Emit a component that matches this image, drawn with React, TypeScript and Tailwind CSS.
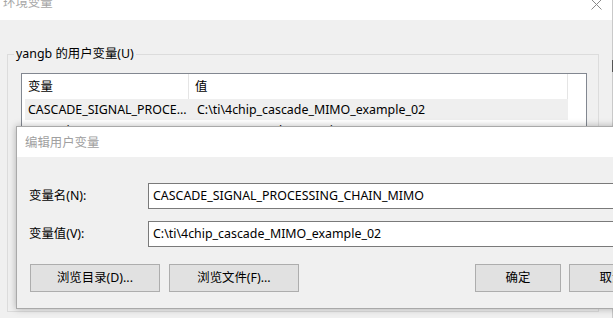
import React from "react";

const font = { fontFamily: '"Noto Sans", "Noto Sans CJK SC", sans-serif' };

export default function App() {
  return (
    <div
      className="relative w-[613px] h-[318px] overflow-hidden bg-[#f0f0f0] text-[12.4px] leading-[16px] text-black"
      style={font}
    >
      {/* Background window: 环境变量 */}
      <div className="flex flex-col w-[613px] h-[318px] border-r border-[#c9c9c9]">
        <div className="relative h-[20px] shrink-0 bg-white">
          <div className="pl-[3px] -mt-[4px] text-[#a6a6a6] leading-[14px]">环境变量</div>
          <svg className="absolute left-[591px] -top-[1px]" width="11" height="11" viewBox="0 0 11 11">
            <path d="M0.5 0.5 L10.5 10.5 M10.5 0.5 L0.5 10.5" stroke="#8a8a8a" strokeWidth="1" fill="none" />
          </svg>
        </div>
        <div className="flex-1 pt-[34px] pl-[7px] pr-[13px]">
          <div className="relative h-[258px] border border-[#dcdcdc] pt-[18px] pl-[13px]">
            <div className="absolute -top-[9px] left-[6px] bg-[#f0f0f0] px-[2px] leading-[16px]">
              yangb 的用户变量(U)
            </div>
            <div className="w-[566px] h-[120px] border border-[#828790] bg-white">
              <div className="flex h-[25px] w-[546px] items-center border-r border-[#e5e5e5]">
                <div className="w-[167px] h-full flex items-center pl-[6px] border-r border-[#e5e5e5]">变量</div>
                <div className="pl-[6px]">值</div>
              </div>
              <div className="ml-[3px] w-[543px] h-[21px] flex items-center bg-[#efefef]">
                <div className="w-[164px] pl-[3px] whitespace-nowrap">CASCADE_SIGNAL_PROCE...</div>
                <div className="pl-[8px] whitespace-nowrap">C:\ti\4chip_cascade_MIMO_example_02</div>
              </div>
              <div className="ml-[3px] w-[543px] h-[21px] flex items-center">
                <div className="w-[164px] pl-[3px] whitespace-nowrap">OneDrive</div>
                <div className="pl-[8px] whitespace-nowrap">C:\Users\yangb\OneDrive</div>
              </div>
            </div>
          </div>
        </div>
      </div>
      <div className="absolute left-[612px] top-[60px] w-[1px] h-[12px] bg-[#555]" />

      {/* Foreground dialog: 编辑用户变量 */}
      <div className="absolute left-[16px] top-[126px] w-[680px] h-[183px] flex flex-col border border-[#a9a9a9] bg-[#f0f0f0] shadow-[0_0_7px_rgba(0,0,0,0.28)]">
        <div className="h-[30px] shrink-0 bg-white flex items-center pl-[8px] pt-[1px] text-[#a0a0a0]">编辑用户变量</div>
        <div className="flex flex-col pt-[26px] pl-[12px]">
          <div className="flex items-center">
            <div className="w-[119px]">变量名(N):</div>
            <div className="w-[520px] h-[26px] border border-[#7a7a7a] bg-white flex items-center pl-[4px] whitespace-nowrap">
              CASCADE_SIGNAL_PROCESSING_CHAIN_MIMO
            </div>
          </div>
          <div className="flex items-center mt-[12px]">
            <div className="w-[119px]">变量值(V):</div>
            <div className="w-[520px] h-[26px] border border-[#7a7a7a] bg-white flex items-center pl-[4px] whitespace-nowrap">
              C:\ti\4chip_cascade_MIMO_example_02
            </div>
          </div>
          <div className="flex mt-[17px] pl-[1px]">
            <div className="w-[130px] h-[28px] border border-[#adadad] bg-[#e1e1e1] flex items-center justify-center">
              浏览目录(D)...
            </div>
            <div className="ml-[9px] w-[130px] h-[28px] border border-[#adadad] bg-[#e1e1e1] flex items-center justify-center">
              浏览文件(F)...
            </div>
            <div className="ml-[176px] w-[86px] h-[28px] border border-[#adadad] bg-[#e1e1e1] flex items-center justify-center">
              确定
            </div>
            <div className="ml-[8px] w-[86px] h-[28px] border border-[#adadad] bg-[#e1e1e1] flex items-center justify-center">
              取消
            </div>
          </div>
        </div>
      </div>
    </div>
  );
}
